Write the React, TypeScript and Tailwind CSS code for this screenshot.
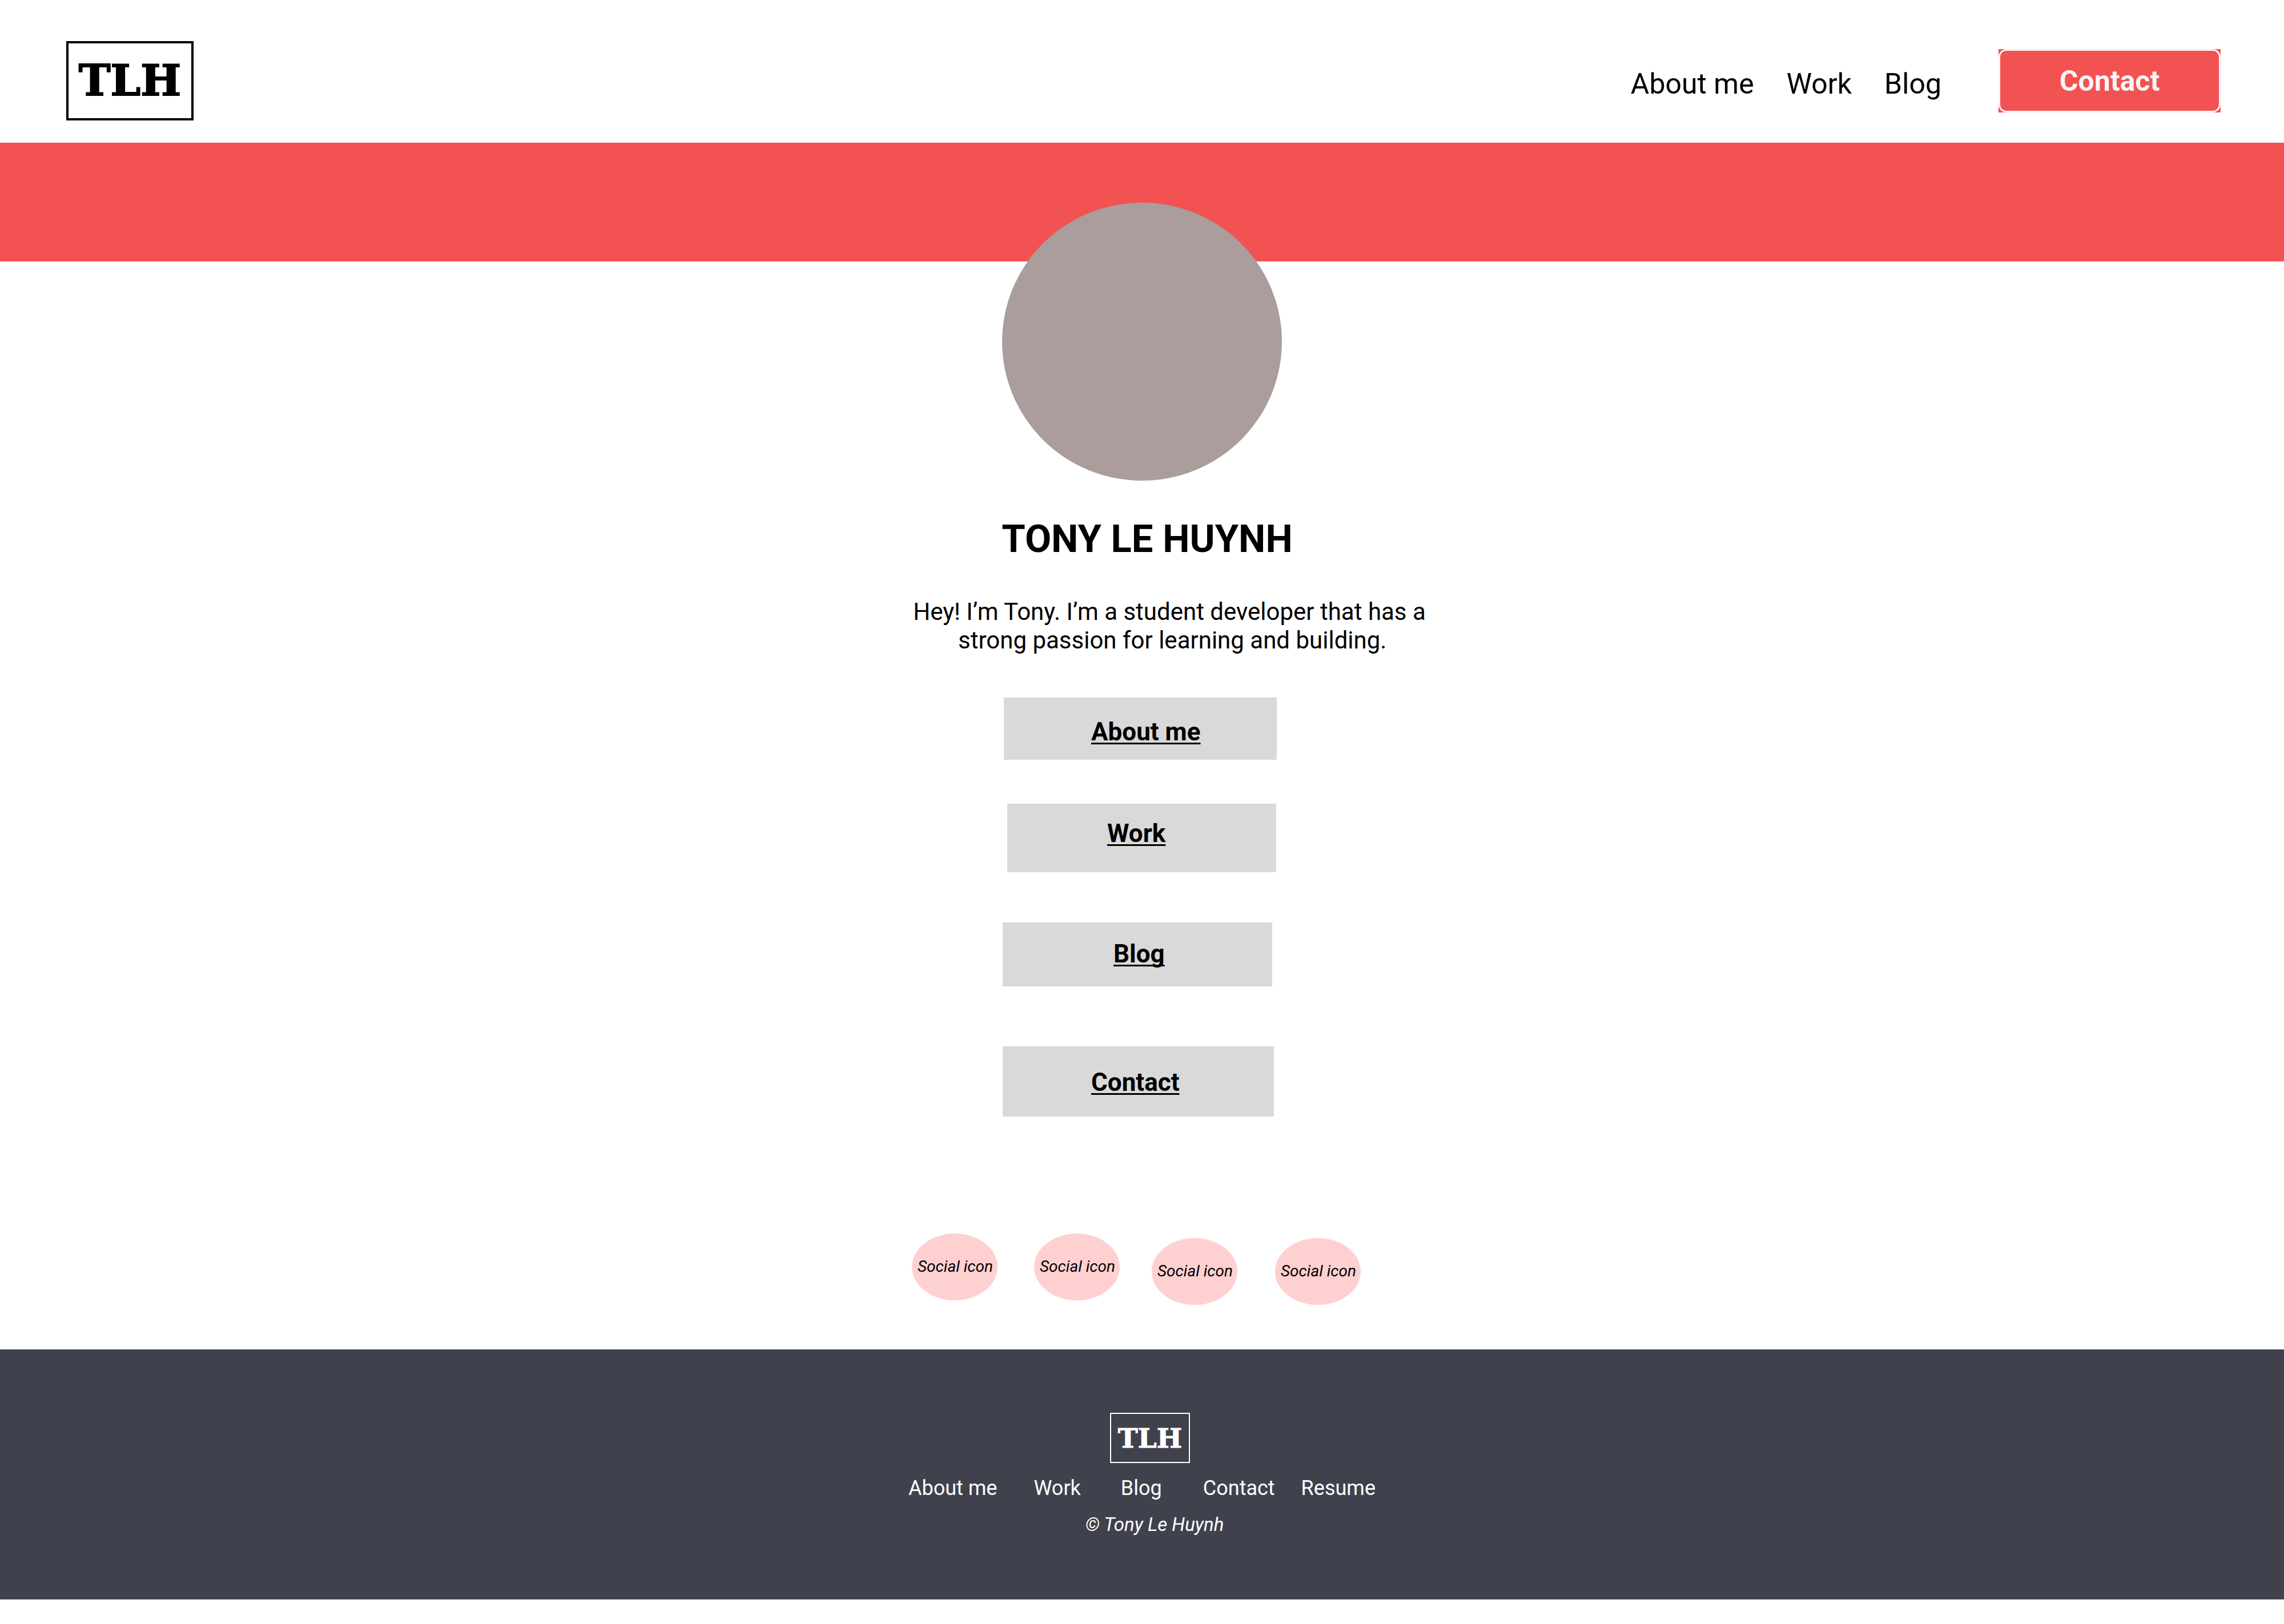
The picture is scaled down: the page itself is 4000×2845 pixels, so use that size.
const headerLinks = ["About me", "Work", "Blog"];

const sectionLinks = [
  { label: "About me", box: "h-[109px] w-[478px] ml-0.5 pl-[153px] pt-2.5" },
  { label: "Work", box: "mt-[77px] ml-2 h-[120px] w-[471px] pl-[175px] pb-4" },
  { label: "Blog", box: "mt-[88px] h-[112px] w-[472px] pl-[194px] pb-0.5" },
  { label: "Contact", box: "mt-[105px] h-[123px] w-[475px] pl-[155px] pt-0.5" },
];

const socialLinks = ["", "ml-16", "ml-14 mt-2", "ml-[66px] mt-2"];

const footerLinks = [
  { label: "About me", gap: "" },
  { label: "Work", gap: "ml-16" },
  { label: "Blog", gap: "ml-[70px]" },
  { label: "Contact", gap: "ml-[72px]" },
  { label: "Resume", gap: "ml-[46px]" },
];

function Header() {
  return (
    <header className="flex items-center justify-between pt-[72px] pr-[111px] pb-[39px] pl-[116px]">
      <a
        href="#home"
        className="flex h-[139px] w-[223px] items-center justify-center border-4 border-black font-['DejaVu_Serif',serif] text-[75px] leading-none font-bold [-webkit-text-stroke:2px_black]"
      >
        TLH
      </a>
      <div className="flex items-center">
        <nav className="flex gap-[57px] pt-2.5 text-[50px] leading-none">
          {headerLinks.map((label) => (
            <a key={label} href="#section">
              {label}
            </a>
          ))}
        </nav>
        <button
          type="button"
          className="ml-[100px] h-[111px] w-[389px] bg-[#f35252] text-[50px] leading-none font-bold text-[#f9f5f5]"
        >
          <span className="flex h-full items-center justify-center rounded-[14px] border-3 border-[#fef0f0]">
            Contact
          </span>
        </button>
      </div>
    </header>
  );
}

function Footer() {
  return (
    <footer className="flex flex-col items-center bg-[#3f424d] py-[111px] text-white">
      <div className="pl-7">
        <a
          href="#home"
          className="flex h-[88px] w-[140px] items-center justify-center border-2 border-white font-['DejaVu_Serif',serif] text-[47px] leading-none font-bold [-webkit-text-stroke:1px_white]"
        >
          TLH
        </a>
      </div>
      <nav className="mt-6 flex text-[36px] leading-[40px]">
        {footerLinks.map(({ label, gap }) => (
          <a key={label} href="#section" className={gap}>
            {label}
          </a>
        ))}
      </nav>
      <p className="mt-6 pl-11 text-[33px] leading-[40px] italic">© Tony Le Huynh</p>
    </footer>
  );
}

export default function App() {
  return (
    <div className="bg-white font-['Roboto',sans-serif] text-black">
      <Header />
      <div className="h-[208px] bg-[#f35252]" />
      <main className="flex flex-col items-center pb-[78px]">
        <div className="relative -mt-[103px] h-[487px] w-[490px] rounded-[50%] bg-[#aa9d9c]" />
        <h1 className="mt-[62px] pl-[18px] text-[67px] leading-[80px] font-bold">TONY LE HUYNH</h1>
        <p className="mt-[63px] pl-24 text-center text-[42px] leading-[50px]">
          Hey! I’m Tony. I’m a student developer that has a
          <br />
          &nbsp;strong passion for learning and building.
        </p>
        <nav className="mt-[75px] flex w-[488px] flex-col">
          {sectionLinks.map(({ label, box }) => (
            <a
              key={label}
              href="#section"
              className={`flex items-center bg-[#d9d9d9] text-[44px] leading-none font-bold underline decoration-[3px] underline-offset-4 [text-decoration-skip-ink:none] ${box}`}
            >
              {label}
            </a>
          ))}
        </nav>
        <div className="mt-[205px] flex items-start pr-5">
          {socialLinks.map((spacing, i) => (
            <a
              key={i}
              href="#social"
              className={`flex h-[117px] w-[150px] items-center justify-center rounded-[50%] bg-[#ffd0d0] pb-0.5 pl-0.5 text-[28px] leading-none italic ${spacing}`}
            >
              Social icon
            </a>
          ))}
        </div>
      </main>
      <Footer />
    </div>
  );
}
